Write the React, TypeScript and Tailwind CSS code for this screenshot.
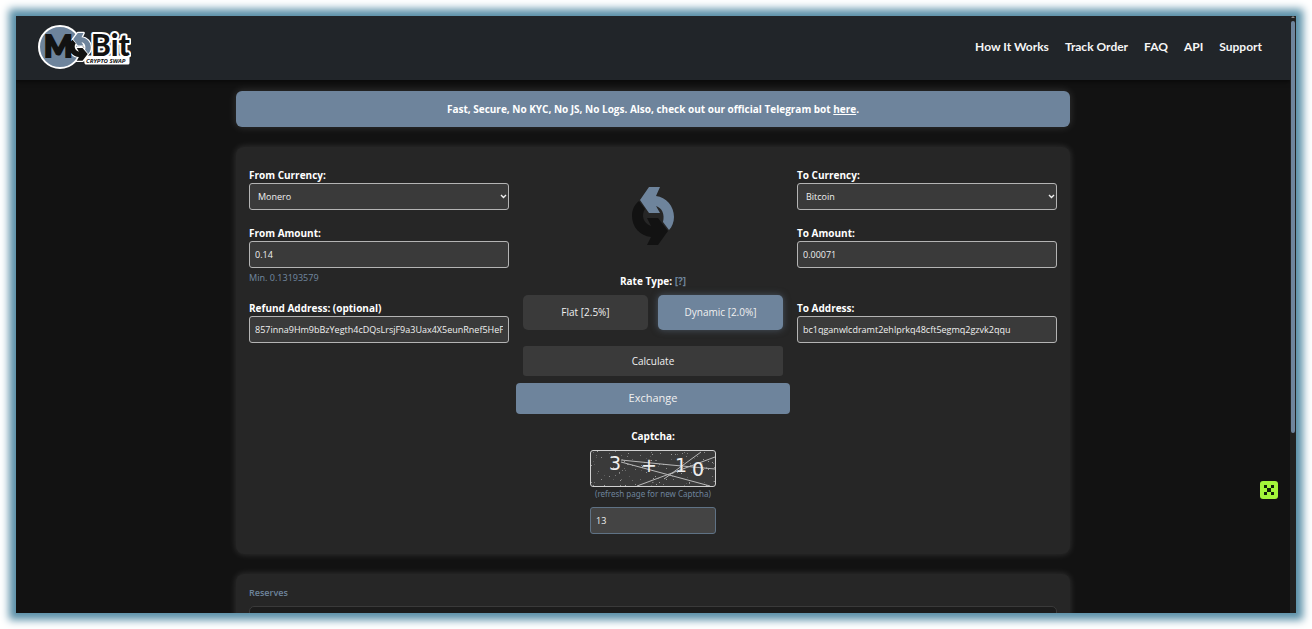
import { useState } from "react";

const NAV_LINKS = ["How It Works", "Track Order", "FAQ", "API", "Support"];

const CURRENCIES = ["Monero", "Bitcoin", "Litecoin", "Ethereum"];

const RATES = [
  { id: "flat", label: "Flat [2.5%]" },
  { id: "dynamic", label: "Dynamic [2.0%]" },
];

const FIELD =
  "block w-full h-[27px] rounded-[3px] border border-[#b4b4b4] bg-[#3a3a3a] text-[9px] font-medium text-[#f0f0f0] focus:outline-none";

const LABEL = "block text-[10px] leading-4 font-bold text-white";

// speckles behind the captcha digits
const SPECKS = Array.from({ length: 130 }, (_, i) => ({
  x: (i * 47 + ((i * i * 13) % 31)) % 124,
  y: (i * 29 + ((i * i * 7) % 17)) % 35,
  o: 0.2 + ((i * 7) % 5) * 0.1,
}));

function SwapArrows() {
  return (
    <>
      <path fill="#6e849c" d="M17 0H28L24 9C34 10 42 19 42 30C42 35 40 40 37 43L31 35C33 27 30 21 24 19L28 26H17L8 13Z" />
      <path fill="#121212" d="M26 58H15L19 50C8 49 0 40 0 29C0 23 2 18 7 14L13 22C9 28 11 36 19 39L15 31H26L36 44Z" />
    </>
  );
}

function Logo() {
  return (
    <svg width="94" height="46" viewBox="0 0 94 46" role="img" aria-label="MoBit Crypto Swap">
      <path d="M48 33H91V39H49Z" fill="#fff" stroke="#fff" strokeWidth="3" strokeLinejoin="round" />
      <circle cx="23" cy="23" r="21" fill="#6e849c" stroke="#fff" strokeWidth="2" />
      <g transform="translate(32 9) scale(0.52 0.48)" stroke="#fff" strokeWidth="5" strokeLinejoin="round">
        <SwapArrows />
      </g>
      <text x="7" y="33" fontFamily="Lato, sans-serif" fontWeight="900" fontSize="30" fill="#121212" stroke="#121212" strokeWidth="2">M</text>
      <text
        x="54"
        y="32"
        fontFamily="Lato, sans-serif"
        fontWeight="900"
        fontSize="30"
        fill="#121212"
        stroke="#fff"
        strokeWidth="4"
        strokeLinejoin="round"
        paintOrder="stroke"
      >
        Bit
      </text>
      <g transform="translate(32 9) scale(0.52 0.48)">
        <SwapArrows />
      </g>
      <text x="49" y="39" fontFamily="'Noto Sans', sans-serif" fontWeight="700" fontStyle="italic" fontSize="6" fill="#121212">CRYPTO SWAP</text>
    </svg>
  );
}

function Captcha() {
  return (
    <svg viewBox="0 0 124 35" className="block w-full" role="img" aria-label="3 + 10">
      {SPECKS.map((s, i) => (
        <rect key={i} x={s.x} y={s.y} width="1" height="1" fill="#ddd" opacity={s.o} />
      ))}
      <g stroke="#b8b8b8" strokeWidth="1">
        <path d="M30 11L119 35M30 9L80 14L124 18M46 35L124 6M73 28L110 1" fill="none" />
      </g>
      <g fill="#eee" fontFamily="'DejaVu Sans', sans-serif" fontSize="19">
        <text x="18" y="19">3</text>
        <text x="50" y="21">+</text>
        <text x="84" y="21">1</text>
        <text x="101" y="25">0</text>
      </g>
    </svg>
  );
}

function CurrencySelect({ id, label, initial }: { id: string; label: string; initial: string }) {
  return (
    <div>
      <label htmlFor={id} className={LABEL}>{label}</label>
      <div className="relative">
        <select id={id} defaultValue={initial} className={FIELD + " appearance-none px-2"}>
          {CURRENCIES.map((c) => (
            <option key={c}>{c}</option>
          ))}
        </select>
        <svg width="7" height="5" viewBox="0 0 7 5" className="absolute right-[2px] top-[11px] pointer-events-none" aria-hidden="true">
          <path d="M1 1L3.5 3.5L6 1" fill="none" stroke="#f0f0f0" strokeWidth="1.4" />
        </svg>
      </div>
    </div>
  );
}

function TextField({ id, label, initial }: { id: string; label: string; initial: string }) {
  return (
    <div>
      <label htmlFor={id} className={LABEL}>{label}</label>
      <input id={id} type="text" defaultValue={initial} className={FIELD + " px-[5px]"} />
    </div>
  );
}

function Scrollbar() {
  return (
    <div className="w-[6px] shrink-0 bg-[#212121] flex flex-col items-center">
      <div className="h-[5px] flex items-start justify-center">
        <svg width="4" height="2" viewBox="0 0 4 2"><path d="M0 2L2 0L4 2Z" fill="#8a8a8a" /></svg>
      </div>
      <div className="w-1 h-[69%] rounded-full bg-[#6e849c]" />
    </div>
  );
}

export default function App() {
  const [rate, setRate] = useState("dynamic");

  return (
    <div className="h-screen bg-white p-4 font-['Open_Sans','Noto_Sans',sans-serif]">
      <div className="relative h-full flex overflow-hidden bg-[#121212] shadow-[0_0_8px_7px_#5b90a8]">
        <div className="flex-1 min-w-0">
          <header className="h-16 flex items-center justify-between pl-[21px] pr-7 pb-[2px] bg-[#212529] shadow-[0_2px_4px_rgba(0,0,0,0.5)]">
            <a href="#"><Logo /></a>
            <nav className="flex items-center gap-4 font-['Lato',sans-serif]">
              {NAV_LINKS.map((link) => (
                <a key={link} href="#" className="text-[12px] font-bold text-[#f5f5f5]">{link}</a>
              ))}
            </nav>
          </header>

          <main className="max-w-[834px] mx-auto pt-[11px] flex flex-col gap-5">
            {/* Announcement */}
            <p className="h-9 flex items-center justify-center rounded-md bg-[#6e849c] text-[10px] font-bold text-white shadow-[0_0_8px_rgba(255,255,255,0.15)]">
              <span>
                Fast, Secure, No KYC, No JS, No Logs. Also, check out our official Telegram bot{" "}
                <a href="#" className="underline">here</a>.
              </span>
            </p>

            {/* Exchange form */}
            <form
              onSubmit={(e) => e.preventDefault()}
              className="grid grid-cols-3 rounded-lg bg-[#262626] px-[6px] pt-5 pb-5 shadow-[0_0_7px_rgba(255,255,255,0.15)]"
            >
              <div className="px-[7px]">
                <CurrencySelect id="from-currency" label="From Currency:" initial="Monero" />
                <div className="mt-[15px]">
                  <TextField id="from-amount" label="From Amount:" initial="0.14" />
                </div>
                <p className="mt-[2px] mb-[14px] h-4 font-['Noto_Sans'] text-[9px] leading-4 text-[#6e849c]">Min. 0.13193579</p>
                <TextField
                  id="refund-address"
                  label="Refund Address: (optional)"
                  initial="857inna9Hm9bBzYegth4cDQsLrsjF9a3Uax4X5eunRnef5HeFq2vK8"
                />
              </div>

              <div className="flex flex-col items-center text-[#f0f0f0]">
                <svg width="42" height="58" viewBox="0 0 42 58" className="mt-5 mb-7" aria-hidden="true">
                  <SwapArrows />
                </svg>
                <p className={LABEL}>
                  Rate Type: <a href="#" className="font-bold text-[#6e849c]">[?]</a>
                </p>
                <div className="mt-[6px] w-full px-[7px] grid grid-cols-2 gap-[10px]">
                  {RATES.map((r) => (
                    <button
                      key={r.id}
                      type="button"
                      onClick={() => setRate(r.id)}
                      className={
                        rate === r.id
                          ? "h-[35px] rounded-[5px] bg-[#6e849c] text-[10px] font-medium shadow-[0_0_7px_rgba(110,132,156,0.5)]"
                          : "h-[35px] rounded-[5px] bg-[#3a3a3a] text-[10px] font-medium"
                      }
                    >
                      {r.label}
                    </button>
                  ))}
                </div>
                <div className="mt-4 w-full px-[7px]">
                  <button type="button" className="w-full h-[30px] rounded-[3px] bg-[#3a3a3a] text-[10px] font-medium">Calculate</button>
                </div>
                <button type="submit" className="mt-[7px] w-full h-[31px] rounded-[4px] bg-[#6e849c] text-[11px]">Exchange</button>

                <label htmlFor="captcha" className={LABEL + " mt-[14px]"}>Captcha:</label>
                <div className="mt-[6px] w-[126px] rounded-[3px] border border-[#d0d0d0] bg-[#3a3a3a] overflow-hidden">
                  <Captcha />
                </div>
                <p className="font-['Noto_Sans'] text-[8px] leading-[14px] text-[#6e849c]">(refresh page for new Captcha)</p>
                <input
                  id="captcha"
                  type="text"
                  defaultValue="13"
                  className="mt-[6px] w-[126px] h-[27px] rounded-[3px] border border-[#5f7285] bg-[#444] px-[5px] text-[9px] font-medium focus:outline-none"
                />
              </div>

              <div className="px-[7px]">
                <CurrencySelect id="to-currency" label="To Currency:" initial="Bitcoin" />
                <div className="mt-[15px] mb-8">
                  <TextField id="to-amount" label="To Amount:" initial="0.00071" />
                </div>
                <TextField id="to-address" label="To Address:" initial="bc1qganwlcdramt2ehlprkq48cft5egmq2gzvk2qqu" />
              </div>
            </form>

            {/* Reserves */}
            <section className="rounded-lg bg-[#262626] px-[13px] pt-[11px] pb-4 shadow-[0_0_7px_rgba(255,255,255,0.15)]">
              <h2 className="text-[9px] leading-4 font-semibold text-[#6e849c]">Reserves</h2>
              <div className="mt-[5px] h-40 rounded-[5px] border border-[#3a3a3a] bg-[#1c1c1c]" />
            </section>
          </main>
        </div>

        <Scrollbar />

        {/* Floating dice badge */}
        <button type="button" aria-label="Dice" className="absolute right-[18px] bottom-[114px] rounded-[3px] bg-[#a3f53a]">
          <svg width="18" height="18" viewBox="0 0 18 18" fill="#10200a">
            <path d="M4 4h3v3H4zM11 4h3v3h-3zM7 7h4v4H7zM4 11h3v3H4zM11 11h3v3h-3z" />
          </svg>
        </button>
      </div>
    </div>
  );
}
